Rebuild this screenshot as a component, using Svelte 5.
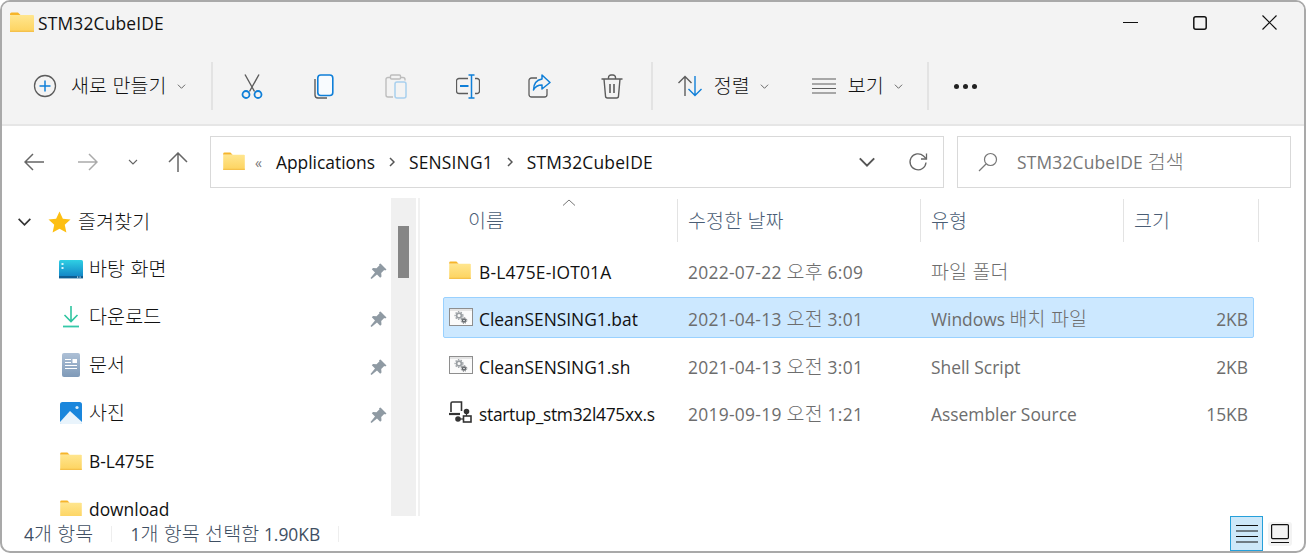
<script>
	const actions = ['cut', 'copy', 'paste', 'rename', 'share', 'trash'];

	const places = [
		{ label: '바탕 화면', icon: 'desktop', pin: true },
		{ label: '다운로드', icon: 'download', pin: true },
		{ label: '문서', icon: 'docs', pin: true },
		{ label: '사진', icon: 'pics', pin: true },
		{ label: 'B-L475E', icon: 'folder' },
		{ label: 'download', icon: 'folder' }
	];

	const files = [
		{ name: 'B-L475E-IOT01A', date: '2022-07-22 오후 6:09', type: '파일 폴더', size: '', icon: 'folder' },
		{ name: 'CleanSENSING1.bat', date: '2021-04-13 오전 3:01', type: 'Windows 배치 파일', size: '2KB', icon: 'script', selected: true },
		{ name: 'CleanSENSING1.sh', date: '2021-04-13 오전 3:01', type: 'Shell Script', size: '2KB', icon: 'script' },
		{ name: 'startup_stm32l475xx.s', date: '2019-09-19 오전 1:21', type: 'Assembler Source', size: '15KB', icon: 'asm' }
	];

	// hangul runs are set a bit larger than latin, like Malgun Gothic next to Segoe UI
	const runs = (text) => text.split(/([\uac00-\ud7a3]+(?: [\uac00-\ud7a3]+)*)/).filter(Boolean);
	const isKo = (run) => /[\uac00-\ud7a3]/.test(run);
</script>

{#snippet txt(text)}
	<span>{#each runs(text) as run}{#if isKo(run)}<span class="ko">{run}</span>{:else}{run}{/if}{/each}</span>
{/snippet}

{#snippet folder(w, h)}
	<svg width={w} height={h} viewBox="0 0 24 20">
		<path d="M0 2a1.500 1.500 0 0 1 1.500-1.500H8L10.500 3H0z" fill="#f6b52a" />
		<rect x="0" y="3" width="24" height="17" rx="1" fill="url(#folderFill)" />
		<rect x="0" y="18.600" width="24" height="1.400" fill="#f5c14b" />
	</svg>
{/snippet}

{#snippet chevron(w, color)}
	<svg width={w} height={w} viewBox="0 0 10 10" fill="none" stroke={color} stroke-width="1.100">
		<path d="M1 3l4 4 4-4" />
	</svg>
{/snippet}

{#snippet placeIcon(name)}
	{#if name === 'desktop'}
		<svg width="24" height="19" viewBox="0 0 24 19">
			<rect width="24" height="18" y="0" rx="1.500" fill="url(#deskFill)" />
			<rect y="16" width="24" height="2.400" fill="#0d5d92" />
			<rect x="2.500" y="3" width="2" height="2" fill="#d9f5fb" />
			<rect x="2.500" y="7" width="2" height="2" fill="#d9f5fb" />
			<rect x="18" y="16.500" width="1.200" height="1.200" fill="#cfeaf5" />
			<rect x="20.500" y="16.500" width="1.200" height="1.200" fill="#cfeaf5" />
		</svg>
	{:else if name === 'download'}
		<svg width="24" height="22" viewBox="0 0 24 22" fill="none" stroke="#2fc5a0" stroke-width="1.600">
			<path d="M12 0v15M5.500 9l6.500 6.500L18.500 9" />
			<path d="M4 20.500h16" stroke="#35c8a8" stroke-width="1.800" />
		</svg>
	{:else if name === 'docs'}
		<svg width="18" height="24" viewBox="0 0 18 24">
			<rect width="18" height="24" rx="2" fill="url(#docFill)" />
			<path d="M3 6.500h6M3 9.500h6M3 12.500h12M3 15.500h12" stroke="#fff" stroke-width="1.100" />
			<rect x="10.500" y="6" width="4.500" height="4" fill="#fff" />
		</svg>
	{:else if name === 'pics'}
		<svg width="22" height="22" viewBox="0 0 22 22">
			<rect width="22" height="22" rx="2.500" fill="#1a86dc" />
			<path d="M0 20l10-11 12 11v0.500a1.500 1.500 0 0 1-1.500 1.500h-19A1.500 1.500 0 0 1 0 20.500z" fill="#e9f4fc" />
			<circle cx="17" cy="5.500" r="1.600" fill="#d8ecfb" />
		</svg>
	{:else}
		{@render folder(22, 18)}
	{/if}
{/snippet}

{#snippet fileIcon(name)}
	{#if name === 'folder'}
		{@render folder(22, 18)}
	{:else if name === 'script'}
		<svg width="24" height="18" viewBox="0 0 24 18" fill="none">
			<rect x="0.500" y="0.500" width="23" height="17" fill="#fbfbfb" stroke="#8e8e8e" />
			<rect x="1" y="1" width="22" height="2" fill="#e4e4e4" />
			<circle cx="10" cy="7.500" r="2.400" stroke="#9a9fa3" stroke-width="1.700" />
			<circle cx="10" cy="7.500" r="3.900" stroke="#9a9fa3" stroke-width="1.200" stroke-dasharray="1.400 1.400" />
			<circle cx="15" cy="12.500" r="1.500" stroke="#5f6367" stroke-width="1.400" />
			<circle cx="15" cy="12.500" r="2.800" stroke="#5f6367" stroke-width="1" stroke-dasharray="1.100 1.100" />
		</svg>
	{:else}
		<svg width="24" height="22" viewBox="0 0 24 22" fill="none" stroke="#333" stroke-width="1.600">
			<path d="M2 11V2.500A1.500 1.500 0 0 1 3.500 1h9v9" />
			<path d="M0 13h11" stroke-width="2.200" />
			<circle cx="17.500" cy="10.500" r="2" fill="#333" />
			<path d="M17.500 12v3" stroke-width="1.200" />
			<rect x="14.500" y="15" width="7.500" height="6" />
			<circle cx="9" cy="18" r="2" fill="#333" />
			<path d="M10 18h4.500" stroke-width="1.200" />
		</svg>
	{/if}
{/snippet}

{#snippet pin()}
	<svg width="17" height="17" viewBox="0 0 17 17">
		<path d="M10.500 0.500l6 6-1.300 1-1-.5-3 3 .3 3.500-1.300 1.200-3.200-3.200L1.500 16l-1-1 4.500-5.500L1.800 6.300 3 5l3.500.3 3-3-.5-1z" fill="#8f9aa3" />
	</svg>
{/snippet}

{#snippet action(name)}
	{#if name === 'cut'}
		<svg width="22" height="25" viewBox="0 0 22 25" fill="none" stroke="#5c5c5c" stroke-width="1.400">
			<path d="M4 0.500l9.500 17M18 0.500L8.500 17.500" />
			<circle cx="5" cy="20.500" r="3.500" stroke="#0f7fd8" stroke-width="1.800" />
			<circle cx="17" cy="20.500" r="3.500" stroke="#0f7fd8" stroke-width="1.800" />
		</svg>
	{:else if name === 'copy'}
		<svg width="20" height="25" viewBox="0 0 20 25" fill="none">
			<path d="M1 5v16a3 3 0 0 0 3 3h9" stroke="#5c5c5c" stroke-width="1.400" />
			<rect x="3.800" y="1" width="15" height="20.500" rx="3" stroke="#0f7fd8" stroke-width="1.600" fill="#f8fbfe" />
		</svg>
	{:else if name === 'paste'}
		<svg width="22" height="25" viewBox="0 0 22 25" fill="none">
			<path d="M5 3.500H3a2 2 0 0 0-2 2V21a2 2 0 0 0 2 2h5M16 3.500h2a2 2 0 0 1 2 2v1" stroke="#bdbdbd" stroke-width="1.400" />
			<rect x="5.500" y="1" width="10" height="4" rx="1" stroke="#bdbdbd" stroke-width="1.400" />
			<rect x="10" y="8" width="11" height="16" rx="2" stroke="#a9d0ee" stroke-width="1.500" />
		</svg>
	{:else if name === 'rename'}
		<svg width="24" height="25" viewBox="0 0 24 25" fill="none">
			<path d="M12 4.500H3a2.500 2.500 0 0 0-2.500 2.500v10A2.500 2.500 0 0 0 3 19.500h9M19 4.500h2A2.500 2.500 0 0 1 23.500 7v10a2.500 2.500 0 0 1-2.500 2.500h-2" stroke="#5c5c5c" stroke-width="1.300" />
			<path d="M4 12h8.500" stroke="#0f7fd8" stroke-width="2.200" />
			<path d="M15.500 1v23M12.500 1h6M12.500 24h6" stroke="#0f7fd8" stroke-width="1.500" />
		</svg>
	{:else if name === 'share'}
		<svg width="23" height="24" viewBox="0 0 23 24" fill="none">
			<path d="M9 4H3.500A2.500 2.500 0 0 0 1 6.500v14A2.500 2.500 0 0 0 3.500 23h13a2.500 2.500 0 0 0 2.500-2.500V15" stroke="#5c5c5c" stroke-width="1.300" />
			<path d="M14 1l8 7.500-8 6.500v-4c-4 0-6.500 1-8.500 5 0-6 3-10 8.500-11z" stroke="#0f7fd8" stroke-width="1.500" stroke-linejoin="round" />
		</svg>
	{:else}
		<svg width="22" height="25" viewBox="0 0 22 25" fill="none" stroke="#5c5c5c" stroke-width="1.400">
			<path d="M0.500 5h21M7.500 5V3.500a2.500 2.500 0 0 1 2.500-2.500h2a2.500 2.500 0 0 1 2.500 2.500V5" />
			<path d="M3 5l1.500 17a2 2 0 0 0 2 2h9a2 2 0 0 0 2-2L19 5" />
			<path d="M9 10v9M13 10v9" stroke-width="1.600" />
		</svg>
	{/if}
{/snippet}

<div class="page">
	<svg class="defs" width="0" height="0" aria-hidden="true">
		<defs>
			<linearGradient id="folderFill" x1="0" y1="0" x2="0" y2="1">
				<stop offset="0" stop-color="#ffe68f" />
				<stop offset="1" stop-color="#fdd35f" />
			</linearGradient>
			<linearGradient id="deskFill" x1="0" y1="0" x2="0" y2="1">
				<stop offset="0" stop-color="#2fd0e4" />
				<stop offset="1" stop-color="#0f7fc4" />
			</linearGradient>
			<linearGradient id="docFill" x1="0" y1="0" x2="0" y2="1">
				<stop offset="0" stop-color="#adc0d6" />
				<stop offset="1" stop-color="#7f9ab8" />
			</linearGradient>
		</defs>
	</svg>

	<div class="win">
		<header class="titlebar">
			<div class="title-icon">{@render folder(24, 20)}</div>
			<span class="title caps">STM32CubeIDE</span>
			<div class="win-controls">
				<svg width="15" height="15" viewBox="0 0 15 15" stroke="#111" fill="none" stroke-width="1.200"><path d="M0 7.500h15" /></svg>
				<svg width="14" height="14" viewBox="0 0 14 14" stroke="#111" fill="none" stroke-width="1.500"><rect x="0.800" y="0.800" width="12.400" height="12.400" rx="2" /></svg>
				<svg width="15" height="15" viewBox="0 0 15 15" stroke="#111" fill="none" stroke-width="1.200"><path d="M0.500 0.500l14 14M14.500 0.500l-14 14" /></svg>
			</div>
		</header>

		<div class="toolbar">
			<button class="new">
				<svg width="24" height="24" viewBox="0 0 24 24" fill="none">
					<circle cx="12" cy="12" r="10.500" stroke="#5c5c5c" stroke-width="1.300" />
					<path d="M12 6.500v11M6.500 12h11" stroke="#0f7fd8" stroke-width="1.500" />
				</svg>
				<span class="new-label">{@render txt('새로 만들기')}</span>
				{@render chevron(9, '#666')}
			</button>
			<i class="sep first"></i>
			{#each actions as a}
				<button class="tool">{@render action(a)}</button>
			{/each}
			<i class="sep"></i>
			<button class="menu sort">
				<svg width="24" height="22" viewBox="0 0 24 22" fill="none" stroke-width="1.400">
					<path d="M7 21V1.500M0.500 8L7 1.500 13.500 8" stroke="#5c5c5c" />
					<path d="M17 1v19.500M10.500 14l6.500 6.500 6.500-6.500" stroke="#0f7fd8" />
				</svg>
				<span class="menu-label">{@render txt('정렬')}</span>
				{@render chevron(9, '#666')}
			</button>
			<button class="menu view">
				<svg width="24" height="16" viewBox="0 0 24 16" stroke="#5c5c5c" stroke-width="1.200">
					<path d="M0 1h24M0 6h24M0 10.500h24M0 15h24" />
				</svg>
				<span class="menu-label">{@render txt('보기')}</span>
				{@render chevron(9, '#666')}
			</button>
			<i class="sep third"></i>
			<button class="more" aria-label="more"><b></b><b></b><b></b></button>
		</div>

		<div class="addressbar">
			<nav class="nav">
				<svg class="back" width="20" height="18" viewBox="0 0 20 18" fill="none" stroke="#666" stroke-width="1.500"><path d="M20 9H1M9 1L1 9l8 8" /></svg>
				<svg width="20" height="18" viewBox="0 0 20 18" fill="none" stroke="#aaa" stroke-width="1.500"><path d="M0 9h19M11 1l8 8-8 8" /></svg>
				{@render chevron(10, '#666')}
				<svg width="20" height="20" viewBox="0 0 20 20" fill="none" stroke="#666" stroke-width="1.500"><path d="M10 20V1M1 10l9-9 9 9" /></svg>
			</nav>
			<div class="crumbs">
				<div class="crumb-icon">{@render folder(22, 18)}</div>
				<span class="quote">«</span>
				<span>Applications</span>
				<svg class="gt" width="6" height="10" viewBox="0 0 6 10" fill="none" stroke="#555" stroke-width="1.500"><path d="M1 1l4 4-4 4" /></svg>
				<span class="caps">SENSING1</span>
				<svg class="gt" width="6" height="10" viewBox="0 0 6 10" fill="none" stroke="#555" stroke-width="1.500"><path d="M1 1l4 4-4 4" /></svg>
				<span class="caps">STM32CubeIDE</span>
				<div class="crumb-end">
					{@render chevron(18, '#555')}
					<svg width="20" height="20" viewBox="0 0 20 20" fill="none" stroke="#666" stroke-width="1.300">
						<path d="M18 10.500A8 8 0 1 1 15.500 4L18 6.500" />
						<path d="M18.500 1.500v5.500h-5.500" />
					</svg>
				</div>
			</div>
			<div class="search">
				<svg width="20" height="20" viewBox="0 0 20 20" fill="none" stroke="#777" stroke-width="1.200">
					<circle cx="12.500" cy="7.500" r="6" />
					<path d="M8 12L1 19" />
				</svg>
				<span class="caps">{@render txt('STM32CubeIDE 검색')}</span>
			</div>
		</div>

		<div class="body">
			<aside class="side">
				<div class="tree">
					<div class="tree-head">
						<svg class="tree-chev" width="13" height="13" viewBox="0 0 10 10" fill="none" stroke="#333" stroke-width="1.300"><path d="M0.500 3L5 7.500 9.500 3" /></svg>
						<svg width="23" height="22" viewBox="0 0 24 23"><path d="M12 0.500l3.500 7.500 8 1-6 5.500 1.700 8L12 18.500 4.800 22.500l1.700-8-6-5.500 8-1z" fill="#fdbf13" /></svg>
						<span class="head-label">{@render txt('즐겨찾기')}</span>
					</div>
					{#each places as p}
						<div class="tree-row">
							<div class="tree-icon">{@render placeIcon(p.icon)}</div>
							{@render txt(p.label)}
							{#if p.pin}<div class="pin">{@render pin()}</div>{/if}
						</div>
					{/each}
				</div>
				<div class="track"><div class="thumb"></div></div>
			</aside>

			<section class="list">
				<div class="cols">
					<div class="col name-col">{@render txt('이름')}<svg class="sort-caret" width="14" height="7" viewBox="0 0 14 7" fill="none" stroke="#777"><path d="M1 6.500L7 1l6 5.500" /></svg></div>
					<div class="col">{@render txt('수정한 날짜')}</div>
					<div class="col">{@render txt('유형')}</div>
					<div class="col">{@render txt('크기')}</div>
				</div>
				{#each files as f}
					<div class="row" class:selected={f.selected}>
						<div class="cell name">
							<div class="file-icon">{@render fileIcon(f.icon)}</div>
							<span class:tight={f.icon === 'asm'} class:caps={f.icon === 'folder'}>{f.name}</span>
						</div>
						<div class="cell date">{@render txt(f.date)}</div>
						<div class="cell">{@render txt(f.type)}</div>
						<div class="cell size">{f.size}</div>
					</div>
				{/each}
			</section>
		</div>

		<footer class="status">
			<span class="count">{@render txt('4개 항목')}</span>
			<i class="status-sep"></i>
			{@render txt('1개 항목 선택함 1.90KB')}
			<i class="status-sep"></i>
			<div class="toggles">
				<div class="toggle on">
					<svg width="22" height="20" viewBox="0 0 22 20" stroke="#111" stroke-width="1.200"><path d="M0 1.500h22M0 7h22M0 12.500h22M0 18h22" /></svg>
				</div>
				<div class="toggle off">
					<svg width="18" height="20" viewBox="0 0 18 20" stroke="#111" fill="none" stroke-width="1.200"><rect x="0.600" y="0.600" width="16.800" height="14" rx="1" /><path d="M0 18.500h18" /></svg>
				</div>
			</div>
		</footer>
	</div>
</div>

<style>
	:global(body) {
		background: #fff;
	}

	.page {
		width: 1311px;
		height: 559px;
		overflow: hidden;
		font-family: 'Open Sans', 'Noto Sans CJK KR', sans-serif;
		font-size: 17.4px;
		color: #111;
	}

	.ko {
		font-size: 19.5px;
		font-weight: 300;
		letter-spacing: 0.15px;
		line-height: 1;
	}

	.caps {
		letter-spacing: 0.18px;
	}

	.tight {
		letter-spacing: -0.3px;
	}

	.defs {
		display: block;
	}

	.win {
		box-sizing: border-box;
		width: 1306px;
		height: 553px;
		border: 2px solid #a9a9a9;
		border-radius: 10px;
		background: #fff;
		overflow: hidden;
		display: flex;
		flex-direction: column;
	}

	button {
		font: inherit;
		color: inherit;
		border: 0;
		padding: 0;
		background: none;
		display: flex;
		align-items: center;
	}

	.titlebar {
		height: 42px;
		flex: none;
		display: flex;
		align-items: center;
		background: #f3f3f3;
		padding-left: 8px;
	}

	.title-icon {
		height: 20px;
		margin-top: -2px;
	}

	.title {
		margin-left: 4px;
	}

	.win-controls {
		margin-left: auto;
		margin-right: 27px;
		display: flex;
		align-items: center;
		gap: 55px;
		margin-top: -1px;
	}

	.toolbar {
		flex: none;
		display: flex;
		align-items: center;
		background: #f3f3f3;
		border-bottom: 2px solid #e6e6e6;
		padding-left: 31px;
		padding-top: 4px;
		box-sizing: border-box;
		height: 82px;
	}

	.new-label {
		margin: 0 10px 0 14px;
	}

	.sep {
		width: 2px;
		height: 48px;
		flex: none;
		background: #e3e3e3;
		margin: 0 3px;
	}

	.sep.first {
		margin-left: 25px;
	}

	.tool {
		width: 72px;
		flex: none;
		justify-content: center;
	}

	.menu {
		flex: none;
	}

	.menu-label {
		margin: 0 10px 0 12px;
	}

	.sort {
		margin-left: 22px;
		width: 134px;
	}

	.sep.third {
		margin-left: 24px;
	}

	.more {
		margin-left: 22px;
		gap: 4px;
	}

	.more b {
		width: 5px;
		height: 5px;
		border-radius: 50%;
		background: #222;
	}

	.addressbar {
		height: 72px;
		flex: none;
		display: flex;
		align-items: center;
	}

	.nav {
		width: 208px;
		flex: none;
		display: flex;
		align-items: center;
		box-sizing: border-box;
		padding-left: 22px;
		gap: 30px;
	}

	.back {
		margin-right: 4px;
	}

	.crumbs {
		box-sizing: border-box;
		width: 734px;
		height: 52px;
		flex: none;
		border: 1px solid #d9d9d9;
		display: flex;
		align-items: center;
		padding-left: 12px;
		background: #fff;
	}

	.crumb-icon {
		height: 18px;
		margin-top: -4px;
	}

	.quote {
		margin: 0 14px 0 10px;
		color: #777;
		font-size: 14px;
	}

	.gt {
		margin: 0 14px;
		flex: none;
	}

	.crumb-end {
		margin-left: auto;
		margin-right: 15px;
		display: flex;
		align-items: center;
		gap: 32px;
	}

	.search {
		box-sizing: border-box;
		width: 334px;
		height: 52px;
		margin-left: 13px;
		flex: none;
		border: 1px solid #d9d9d9;
		display: flex;
		align-items: center;
		padding-left: 20px;
		gap: 19px;
		color: #767676;
	}

	.body {
		height: 318px;
		flex: none;
		display: flex;
		overflow: hidden;
	}

	.side {
		width: 416px;
		flex: none;
		display: flex;
		border-right: 2px solid #f1f1f1;
	}

	.tree {
		width: 389px;
		flex: none;
		overflow: hidden;
	}

	.tree-head,
	.tree-row {
		height: 48px;
		display: flex;
		align-items: center;
	}

	.tree-head {
		padding-left: 16px;
		height: 47px;
	}

	.tree-chev {
		margin-right: 17px;
	}

	.head-label {
		margin-left: 7px;
	}

	.tree-row {
		padding-left: 57px;
	}

	.tree-icon {
		width: 24px;
		display: flex;
		justify-content: center;
		margin-right: 6px;
	}

	.pin {
		margin-left: auto;
		margin-right: 4px;
		height: 17px;
	}

	.track {
		width: 25px;
		flex: none;
		background: #f0f0f0;
		padding-top: 28px;
		box-sizing: border-box;
	}

	.thumb {
		width: 11px;
		height: 52px;
		margin-left: 7px;
		background: #868686;
	}

	.list {
		flex: 1;
		padding-left: 23px;
		min-width: 0;
	}

	.cols,
	.row {
		display: grid;
		grid-template-columns: 235px 243px 203px 130px;
		width: 811px;
	}

	.cols {
		height: 43px;
		margin-top: 1px;
		margin-bottom: 7px;
		color: #4a5d75;
	}

	.col {
		box-sizing: border-box;
		display: flex;
		align-items: center;
		border-right: 1px solid #e3e3e3;
		padding-left: 10px;
		position: relative;
	}

	.col:last-child {
		width: 135px;
	}

	.name-col {
		padding-left: 25px;
	}

	.sort-caret {
		position: absolute;
		left: 119px;
		top: 0;
	}

	.row {
		box-sizing: border-box;
		height: 41px;
		margin-bottom: 6.500px;
		padding-top: 4px;
		border: 1px solid transparent;
		border-radius: 2px;
		align-items: center;
		color: #6d6d6d;
	}

	.row.selected {
		background: #cce8ff;
		border-color: #99d1ff;
	}

	.cell {
		padding-left: 9px;
		white-space: nowrap;
	}

	.cell.date {
		letter-spacing: 0.3px;
	}

	.cell.name {
		padding-left: 5px;
		display: flex;
		align-items: center;
		color: #111;
	}

	.file-icon {
		width: 24px;
		height: 22px;
		display: flex;
		align-items: center;
		margin: -4px 6px 0 0;
	}

	.cell.size {
		text-align: right;
		padding-right: 7px;
	}

	.status {
		flex: 1;
		display: flex;
		align-items: center;
		padding-left: 22px;
		color: #3f4f63;
	}

	.status-sep {
		width: 1px;
		height: 16px;
		margin: 0 18px;
		background: #eee;
	}

	.toggles {
		margin-left: auto;
		margin-right: 12px;
		height: 100%;
		display: flex;
		align-items: center;
	}

	.toggle {
		display: flex;
		align-items: center;
		justify-content: center;
	}

	.toggle.on {
		box-sizing: border-box;
		width: 33px;
		height: 100%;
		border: 1px solid #26a0da;
		background: #cde8f9;
	}

	.toggle.off {
		width: 24px;
		height: 24px;
		margin-left: 5px;
		background: #f3f3f3;
		border-radius: 3px;
	}
</style>
